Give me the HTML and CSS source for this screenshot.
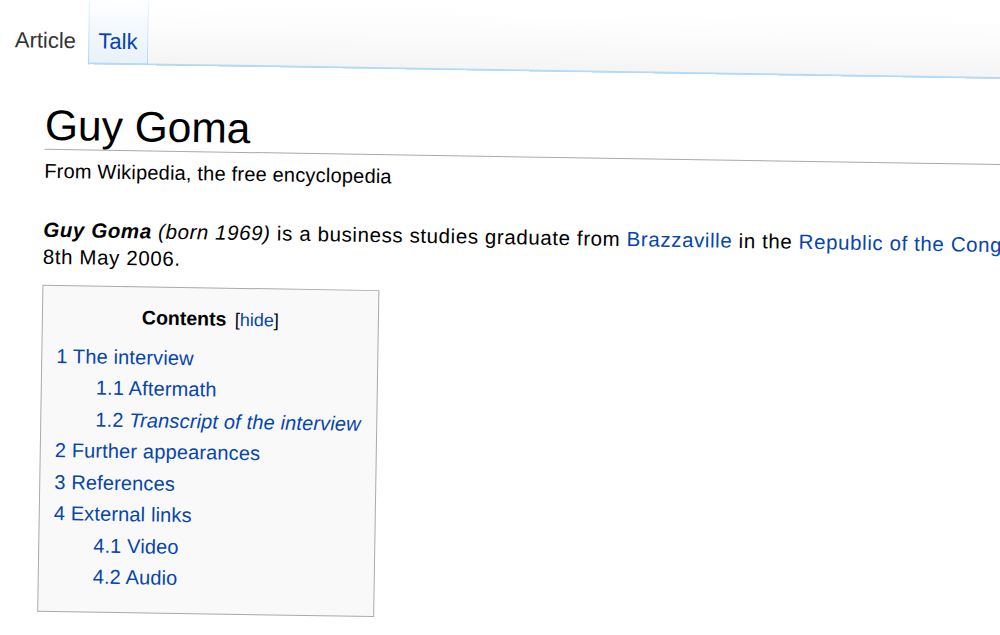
FILE: index.html
```html
<!DOCTYPE html>
<html lang="en">
<head>
<meta charset="utf-8">
<title>Guy Goma - Wikipedia</title>
<link rel="stylesheet" href="styles.css">
</head>
<body>
<div class="page">
  <div class="head">
    <ul class="tabs">
      <li class="tab selected"><span>Article</span></li>
      <li class="tab"><a href="#">Talk</a></li>
    </ul>
    <div class="head-fill"></div>
  </div>
  <div class="content">
    <h1 class="title">Guy Goma</h1>
    <div class="sitesub">From Wikipedia, the free encyclopedia</div>
    <p class="lead"><b><i>Guy Goma</i></b> <i>(born 1969)</i> is a business studies graduate from <a href="#">Brazzaville</a> in the <a href="#">Republic of the Congo</a> who was mistakenly interviewed live on BBC News 24 on<br>8th May 2006.</p>
    <div class="toc">
      <div class="toc-title"><span class="toc-h">Contents</span> <span class="toggle">[<a href="#">hide</a>]</span></div>
      <ul class="toc-list">
        <li><a href="#">1 The interview</a>
          <ul>
            <li><a href="#">1.1 Aftermath</a></li>
            <li><a href="#">1.2 <i>Transcript of the interview</i></a></li>
          </ul>
        </li>
        <li><a href="#">2 Further appearances</a></li>
        <li><a href="#">3 References</a></li>
        <li><a href="#">4 External links</a>
          <ul>
            <li><a href="#">4.1 Video</a></li>
            <li><a href="#">4.2 Audio</a></li>
          </ul>
        </li>
      </ul>
    </div>
  </div>
</div>
</body>
</html>
```
FILE: styles.css
```css
html, body {
  margin: 0;
  padding: 0;
  overflow: hidden;
  background: #fff;
}
body {
  width: 1000px;
  height: 635px;
  font-family: "Liberation Sans", Arial, sans-serif;
  color: #000;
}
a {
  color: #0645ad;
  text-decoration: none;
}
.page {
  width: 1400px;
  transform: rotate(0.92deg);
  transform-origin: 0 0;
}
.head {
  display: flex;
  height: 63px;
}
.tabs {
  display: flex;
  margin: 0;
  padding: 0;
  list-style: none;
}
.tab {
  display: flex;
  align-items: flex-start;
  font-size: 22px;
  line-height: 26px;
  padding: 27px 10px 0 9.5px;
  background: linear-gradient(to bottom, #ffffff 0%, #f3f8fc 45%, #e8f1f9 100%);
  border-style: solid;
  border-width: 0 1px;
  border-image: linear-gradient(to bottom, rgba(167, 215, 249, 0.25), #a7d7f9) 1;
  box-shadow: inset 0 -2px 0 #b4daf7;
}
.tab.selected {
  background: #fff;
  border: none;
  box-shadow: none;
  padding: 27px 12px 0 15.5px;
  color: #333;
}
.head-fill {
  flex: 1;
  background: linear-gradient(to bottom, #ffffff 0%, #fcfcfc 40%, #f4f4f4 100%);
  box-shadow: inset 0 -2px 0 #b4daf7;
}
.content {
  padding-left: 47px;
}
.title {
  margin: 39px 0 0;
  padding: 0;
  font-size: 42.5px;
  font-weight: normal;
  line-height: 46px;
  border-bottom: 1px solid #aaa;
}
.sitesub {
  margin-top: 8px;
  font-size: 20px;
  line-height: 26px;
  letter-spacing: 0.2px;
}
.lead {
  margin: 32px 0 0;
  font-size: 20.5px;
  line-height: 27px;
  letter-spacing: 0.6px;
  white-space: nowrap;
}
.toc {
  box-sizing: border-box;
  width: 337px;
  margin-top: 15px;
  padding: 15px 14px 18px;
  background: #f9f9f9;
  border: 1px solid #aaa;
}
.toc-title {
  text-align: center;
  line-height: 31.5px;
}
.toc-h {
  font-weight: bold;
  font-size: 19.5px;
}
.toggle {
  margin-left: 4px;
  font-size: 18px;
}
.toc-list {
  margin: 7px 0 0;
  padding: 0;
  list-style: none;
  font-size: 20px;
  line-height: 31.5px;
  letter-spacing: 0.15px;
  white-space: nowrap;
}
.toc-list ul {
  margin: 0;
  padding-left: 40px;
  list-style: none;
}
```
